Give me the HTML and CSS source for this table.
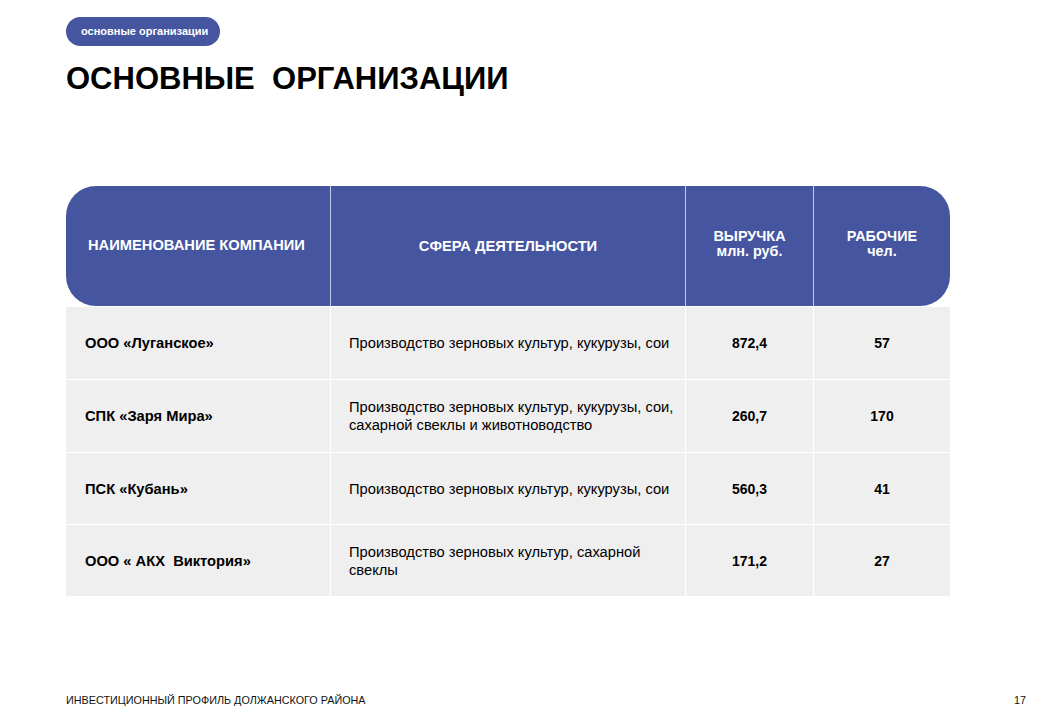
FILE: index.html
```html
<!DOCTYPE html>
<html lang="ru">
<head>
<meta charset="utf-8">
<link rel="stylesheet" href="styles.css">
</head>
<body>
<div class="page">
  <div class="pill">основные организации</div>
  <h1 class="title">ОСНОВНЫЕ&nbsp; ОРГАНИЗАЦИИ</h1>
  <div class="table">
    <div class="hcell first left">НАИМЕНОВАНИЕ КОМПАНИИ</div>
    <div class="hcell">СФЕРА ДЕЯТЕЛЬНОСТИ</div>
    <div class="hcell center">ВЫРУЧКА<br>млн. руб.</div>
    <div class="hcell center last">РАБОЧИЕ<br>чел.</div>

    <div class="cell name">ООО «Луганское»</div>
    <div class="cell desc">Производство зерновых культур, кукурузы, сои</div>
    <div class="cell num">872,4</div>
    <div class="cell num">57</div>

    <div class="cell name">СПК «Заря Мира»</div>
    <div class="cell desc">Производство зерновых культур, кукурузы, сои, сахарной свеклы и животноводство</div>
    <div class="cell num">260,7</div>
    <div class="cell num">170</div>

    <div class="cell name">ПСК «Кубань»</div>
    <div class="cell desc">Производство зерновых культур, кукурузы, сои</div>
    <div class="cell num">560,3</div>
    <div class="cell num">41</div>

    <div class="cell name">ООО « АКХ&nbsp; Виктория»</div>
    <div class="cell desc">Производство зерновых культур, сахарной свеклы</div>
    <div class="cell num">171,2</div>
    <div class="cell num">27</div>
  </div>
  <div class="footer">
    <span>ИНВЕСТИЦИОННЫЙ ПРОФИЛЬ ДОЛЖАНСКОГО РАЙОНА</span>
    <span>17</span>
  </div>
</div>
</body>
</html>
```

FILE: styles.css
```css
html, body {
  margin: 0;
  padding: 0;
  background: #ffffff;
}
body {
  font-family: "Liberation Sans", Arial, sans-serif;
  color: #000;
}
.page {
  width: 1040px;
  height: 720px;
  box-sizing: border-box;
  padding: 17px 0 0 66px;
  display: flex;
  flex-direction: column;
  align-items: flex-start;
}
.pill {
  background: #4655a0;
  color: #fff;
  font-size: 11px;
  font-weight: bold;
  height: 29px;
  line-height: 29px;
  padding: 0 0 0 15px;
  border-radius: 15px;
  box-sizing: border-box;
  width: 154px;
  white-space: nowrap;
}
.title {
  margin: 16px 0 0 0;
  font-size: 31px;
  font-weight: bold;
  line-height: 34px;
  letter-spacing: 0;
}
.table {
  margin-top: 90px;
  display: grid;
  grid-template-columns: 264px 355px 128px 137px;
  grid-template-rows: 120px 73px 73px 72px 72px;
}
.hcell {
  background: #4655a0;
  color: #fff;
  font-size: 14.7px;
  font-weight: bold;
  line-height: 18px;
  display: flex;
  align-items: center;
  justify-content: center;
  text-align: center;
  border-left: 1px solid #c3c9e6;
}
.hcell.first {
  border-left: none;
  border-radius: 30px 0 0 30px;
}
.hcell.left {
  justify-content: flex-start;
  padding-left: 22px;
  padding-bottom: 2px;
}
.hcell.last {
  border-radius: 0 30px 30px 0;
}
.hcell.center {
  font-size: 14.4px;
  line-height: 15px;
  padding-bottom: 5px;
}
.cell {
  background: #efefef;
  font-size: 14.7px;
  line-height: 18px;
  display: flex;
  align-items: center;
  border-top: 1px solid #ffffff;
  border-left: 1px solid #ffffff;
}
.cell.name {
  border-left: none;
  font-weight: bold;
  font-size: 14.7px;
  padding-left: 19px;
}
.cell.desc {
  padding: 0 6px 0 18px;
}
.cell.num {
  font-weight: bold;
  font-size: 14px;
  justify-content: center;
}
.footer {
  margin-top: auto;
  margin-bottom: 14px;
  width: 960px;
  display: flex;
  justify-content: space-between;
  font-size: 10.8px;
  color: #111;
}
```
